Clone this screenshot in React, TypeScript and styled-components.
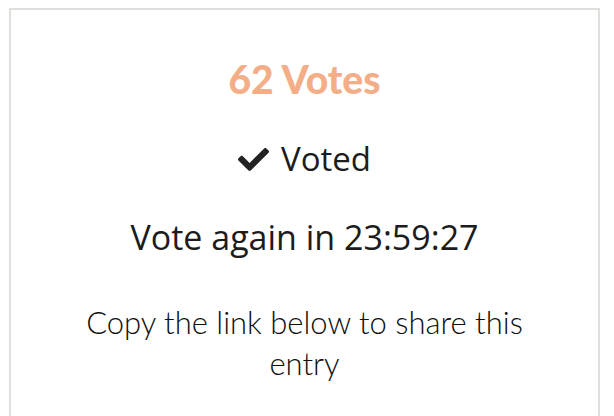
import * as React from 'react';
import styled, { createGlobalStyle } from 'styled-components';
import { FaCheck } from 'react-icons/fa';

const GlobalStyle = createGlobalStyle`
    html, body {
        margin: 0;
        padding: 0;
        background: #ffffff;
    }
    body {
        padding: 8px 14px 0 9px;
        overflow: hidden;
    }
`

const VoteCard = styled.div`
    box-sizing: border-box;
    border: 2px solid #dfdfdb;
    border-bottom: none;
    height: calc(100vh - 8px);
    display: flex;
    flex-direction: column;
    align-items: center;
    text-align: center;
    padding: 0 50px;
    color: #1c1c1c;
`

const VoteCount = styled.div`
    font-family: 'Lato', 'Liberation Sans', sans-serif;
    font-weight: 900;
    font-size: 39px;
    line-height: 46px;
    color: #f3ae88;
    margin-top: 46px;
`

const StatusLine = styled.div<{ top: number }>`
    font-family: 'Open Sans', 'Liberation Sans', sans-serif;
    font-size: ${({ top }) => (top > 34 ? 33 : 34)}px;
    line-height: 44px;
    margin-top: ${({ top }) => top}px;
    display: flex;
    align-items: center;
    gap: 12px;
`

const CheckIcon = styled(FaCheck)`
    width: 31px;
    height: 31px;
    color: #222222;
`

const ShareNote = styled.div`
    font-family: 'Lato', 'Liberation Sans', sans-serif;
    font-weight: 300;
    font-size: 31px;
    line-height: 41px;
    margin-top: 43px;
    color: #0e0e0e;
`

const App = () => {
    return (
        <>
            <GlobalStyle />
            <VoteCard>
                <VoteCount>62 Votes</VoteCount>
                <StatusLine top={35}>
                    <CheckIcon />
                    Voted
                </StatusLine>
                <StatusLine top={34}>Vote again in 23:59:27</StatusLine>
                <ShareNote>Copy the link below to share this entry</ShareNote>
            </VoteCard>
        </>
    )
}

export default App
